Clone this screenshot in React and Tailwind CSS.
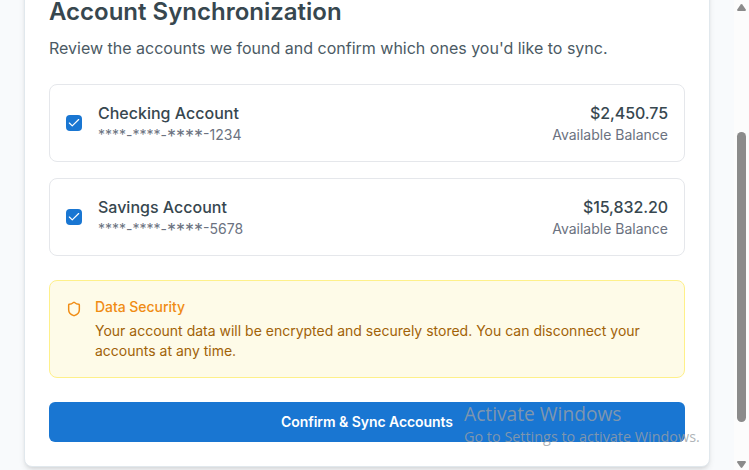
import React from "react";
import { Check, Shield } from "lucide-react";

const accounts = [
  { name: "Checking Account", digits: "1234", balance: "$2,450.75" },
  { name: "Savings Account", digits: "5678", balance: "$15,832.20" },
];

function AccountRow({ name, digits, balance }) {
  return (
    <div className="flex items-center justify-between rounded-lg border border-[#e5e7eb] p-4">
      <div className="flex items-center gap-4">
        <button
          type="button"
          role="checkbox"
          aria-checked="true"
          aria-label={name}
          className="flex size-4 items-center justify-center rounded-[4px] bg-[#1976d2] text-white"
        >
          <Check size={14} strokeWidth={2} />
        </button>
        <div>
          <p className="text-base font-medium text-[#37474f]">{name}</p>
          <p className="text-sm text-[#6b7280]">
            ****-****-
            <span className="relative top-[3px] text-[18px] leading-none">****</span>
            <span className="relative -top-px">-</span>
            {digits}
          </p>
        </div>
      </div>
      <div className="text-right">
        <p className="text-base font-medium tracking-[-0.08px] text-[#37474f]">{balance}</p>
        <p className="text-sm text-[#6b7280]">Available Balance</p>
      </div>
    </div>
  );
}

function ScrollBar() {
  return (
    <div className="flex h-full w-[15px] shrink-0 flex-col items-center bg-[#fcfcfc] pt-1">
      <svg width="9" height="7" viewBox="0 0 9 7" fill="#8b8b8b">
        <path d="M3.7.5Q4.5-.3 5.3.5L8.8 5.4Q9.2 7 8 7H1Q-.2 7 .2 5.4Z" />
      </svg>
      <div className="mt-[121px] h-[290px] w-[9px] rounded-full bg-[#8b8b8b]" />
      <svg className="mt-[39px]" width="9" height="7" viewBox="0 0 9 7" fill="#8b8b8b">
        <path d="M3.7 6.5Q4.5 7.3 5.3 6.5L8.8 1.6Q9.2 0 8 0H1Q-.2 0 .2 1.6Z" />
      </svg>
    </div>
  );
}

export default function App() {
  return (
    <div className="relative flex h-[470px] w-[749px] overflow-hidden bg-[#f8fafc] font-['Inter',sans-serif]">
      <main className="min-w-0 flex-1 pl-6">
        <section className="-mt-6 w-[686px] rounded-lg border border-[#e1e8ed] bg-white px-6 pt-[23px] pb-6 shadow-md">
          <h1 className="text-2xl leading-6 font-semibold text-[#37474f]">Account Synchronization</h1>
          <p className="mt-3 text-base text-[#4b5a64]">
            Review the accounts we found and confirm which ones you'd like to sync.
          </p>
          <div className="mt-6 flex flex-col gap-4">
            {accounts.map((account) => (
              <AccountRow key={account.name} {...account} />
            ))}
          </div>
          <div className="mt-6 flex gap-[13px] rounded-lg border border-[#fef08a] bg-[#fefbe8] p-4">
            <Shield className="mt-1 shrink-0 text-[#f08c14]" size={16} strokeWidth={2.2} />
            <div>
              <h2 className="text-sm font-medium tracking-[-0.04px] text-[#f08c14]">Data Security</h2>
              <p className="mt-1 text-sm text-[#a16207]">
                Your account data will be encrypted and securely stored. You can disconnect your
                accounts at any time.
              </p>
            </div>
          </div>
          <button
            type="button"
            className="mt-6 flex h-10 w-full items-center justify-center rounded-md bg-[#1976d2] text-sm font-semibold tracking-[-0.06px] text-white"
          >
            Confirm &amp; Sync Accounts
          </button>
        </section>
      </main>
      <ScrollBar />
      <div className="pointer-events-none absolute top-[401px] left-[464px] font-['Open_Sans',sans-serif] whitespace-nowrap text-[#9a9fa5]/80">
        <p className="text-[19.2px] leading-[26px]">Activate Windows</p>
        <p className="text-[14.4px] leading-[19px]">Go to Settings to activate Windows.</p>
      </div>
    </div>
  );
}
